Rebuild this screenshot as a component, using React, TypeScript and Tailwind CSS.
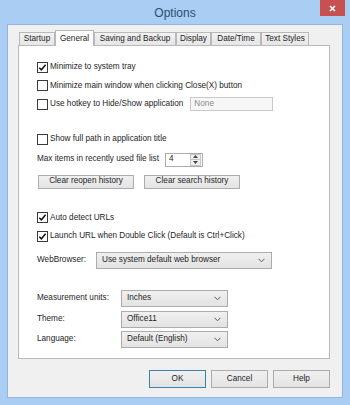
import React from "react";

const font = { fontFamily: '"Liberation Sans", Arial, sans-serif' };

const Check = ({ checked }: { checked?: boolean }) => (
  <div className="w-[11px] h-[11px] border border-[#3a3a3a] bg-white flex items-center justify-center shrink-0">
    {checked && (
      <svg width="9" height="9" viewBox="0 0 9 9">
        <polyline points="1.3,4.7 3.4,6.8 7.6,1.8" fill="none" stroke="#111" strokeWidth="1.5" />
      </svg>
    )}
  </div>
);

const CheckRow = ({ label, checked }: { label: string; checked?: boolean }) => (
  <div className="h-[18.5px] flex items-center gap-[2px]">
    <Check checked={checked} />
    <span>{label}</span>
  </div>
);

const Chevron = () => (
  <svg width="7" height="5" viewBox="0 0 7 5" className="shrink-0">
    <polyline points="0.5,0.8 3.5,3.8 6.5,0.8" fill="none" stroke="#555" strokeWidth="1" />
  </svg>
);

const Select = ({ value, w }: { value: string; w: string }) => (
  <div
    className={`${w} h-[17px] border border-[#acacac] bg-gradient-to-b from-[#f0f0f0] to-[#e3e3e3] flex items-center pl-[5px] pr-[6px] justify-between`}
  >
    <span>{value}</span>
    <Chevron />
  </div>
);

const Btn = ({ label, w, primary }: { label: string; w: string; primary?: boolean }) => (
  <div
    className={`${w} flex items-center justify-center border ${
      primary ? "border-[#3c7fb1]" : "border-[#acacac]"
    } bg-gradient-to-b from-[#f0f0f0] to-[#e3e3e3]`}
  >
    {label}
  </div>
);

const tabs = [
  { name: "Startup", w: "w-[36px]" },
  { name: "General", w: "w-[39px]", active: true },
  { name: "Saving and Backup", w: "w-[82px]" },
  { name: "Display", w: "w-[35px]" },
  { name: "Date/Time", w: "w-[50px]" },
  { name: "Text Styles", w: "w-[48px]" },
];

export default function App() {
  return (
    <div
      className="w-[350px] h-[405px] bg-[#a9cdf3] flex flex-col text-[8.2px] text-[#1e1e1e] relative overflow-hidden"
      style={font}
    >
      {/* Title bar */}
      <div className="h-[24px] flex items-center justify-center shrink-0">
        <span className="text-[12px] text-[#2d4d70] mt-[1px]">Options</span>
      </div>
      <div className="absolute top-0 left-[320px] w-[25px] h-[16px] bg-[#c75050] flex items-center justify-center">
        <svg width="7" height="7" viewBox="0 0 7 7">
          <path d="M1 1 L6 6 M6 1 L1 6" stroke="white" strokeWidth="1.6" />
        </svg>
      </div>

      {/* Client */}
      <div className="flex-1 mx-[7px] mb-[7px] bg-[#f0f0f0] border border-[#93b6dc] pt-[5px] pl-[10px] pr-[12px] flex flex-col">
        {/* Tabs */}
        <div className="h-[15px] flex items-end pl-[1px] relative z-10">
          {tabs.map((t) =>
            t.active ? (
              <div
                key={t.name}
                className={`${t.w} h-[16px] -mb-[1px] bg-white border border-b-0 border-[#b9b9b9] flex items-start justify-center pt-[2px]`}
              >
                {t.name}
              </div>
            ) : (
              <div
                key={t.name}
                className={`${t.w} h-[13px] bg-gradient-to-b from-[#f2f2f2] to-[#e6e6e6] border border-b-0 border-[#b9b9b9] flex items-center justify-center`}
              >
                {t.name}
              </div>
            )
          )}
        </div>

        {/* Panel */}
        <div className="h-[314px] bg-white border border-[#b9b9b9] pt-[12px] pl-[18px] flex flex-col">
          <CheckRow label="Minimize to system tray" checked />
          <CheckRow label="Minimize main window when clicking Close(X) button" />
          <div className="h-[18.5px] flex items-center gap-[2px]">
            <Check />
            <span>Use hotkey to Hide/Show application</span>
            <div className="ml-[5px] w-[83px] h-[14px] border border-[#c8c8c8] bg-[#f7f7f7] flex items-center pl-[3px] text-[#8a8a8a]">
              None
            </div>
          </div>

          <div className="mt-[16.5px]">
            <CheckRow label="Show full path in application title" />
          </div>

          <div className="mt-[2px] h-[18px] flex items-center">
            <span>Max items in recently used file list</span>
            <div className="ml-[6px] w-[38px] h-[14px] border border-[#abadb3] bg-white flex items-center">
              <span className="pl-[3px] flex-1">4</span>
              <div className="w-[11px] h-[12px] mr-[1px] flex flex-col border border-[#c5c5c5] bg-[#efefef]">
                <div className="flex-1 flex items-center justify-center border-b border-[#c5c5c5]">
                  <svg width="5" height="3" viewBox="0 0 5 3">
                    <polygon points="0,3 2.5,0 5,3" fill="#444" />
                  </svg>
                </div>
                <div className="flex-1 flex items-center justify-center">
                  <svg width="5" height="3" viewBox="0 0 5 3">
                    <polygon points="0,0 2.5,3 5,0" fill="#444" />
                  </svg>
                </div>
              </div>
            </div>
          </div>

          <div className="mt-[6px] h-[14px] flex gap-[10px] pl-[1px]">
            <Btn label="Clear reopen history" w="w-[96px]" />
            <Btn label="Clear search history" w="w-[96px]" />
          </div>

          <div className="mt-[20px]">
            <CheckRow label="Auto detect URLs" checked />
            <CheckRow label="Launch URL when Double Click (Default is Ctrl+Click)" checked />
          </div>

          <div className="mt-[6px] flex items-center">
            <span className="w-[59px]">WebBrowser:</span>
            <Select value="Use system default web browser" w="w-[176px]" />
          </div>

          <div className="mt-[21px] flex items-center">
            <span className="w-[84px]">Measurement units:</span>
            <Select value="Inches" w="w-[107px]" />
          </div>
          <div className="mt-[4px] flex items-center">
            <span className="w-[84px]">Theme:</span>
            <Select value="Office11" w="w-[107px]" />
          </div>
          <div className="mt-[3px] flex items-center">
            <span className="w-[84px]">Language:</span>
            <Select value="Default (English)" w="w-[107px]" />
          </div>
        </div>

        {/* Dialog buttons */}
        <div className="mt-[11px] h-[18px] flex justify-end gap-[5px]">
          <Btn label="OK" w="w-[57px]" primary />
          <Btn label="Cancel" w="w-[57px]" />
          <Btn label="Help" w="w-[57px]" />
        </div>
      </div>
    </div>
  );
}
